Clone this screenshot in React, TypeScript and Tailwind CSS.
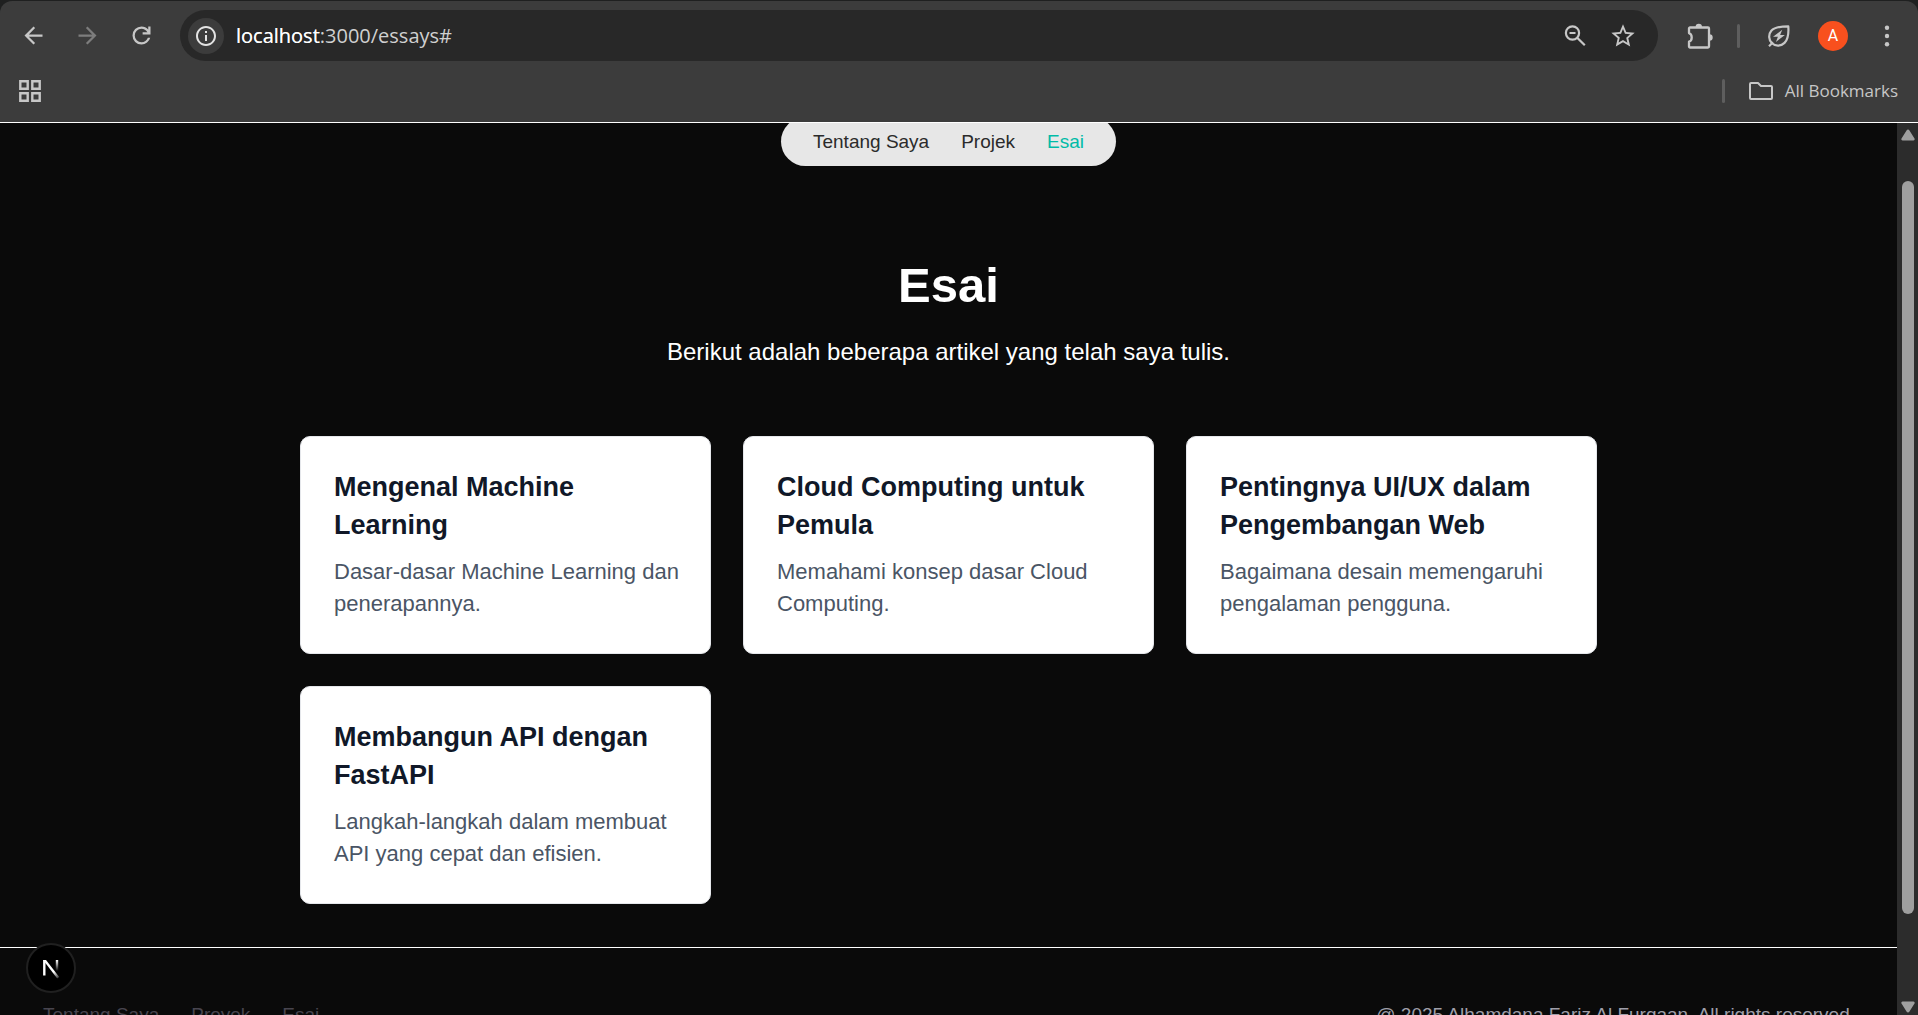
import { MdArrowBack, MdArrowForward, MdInfoOutline, MdStarBorder } from "react-icons/md";

const essays = [
  { title: "Mengenal Machine Learning", text: "Dasar-dasar Machine Learning dan penerapannya." },
  { title: "Cloud Computing untuk Pemula", text: "Memahami konsep dasar Cloud Computing." },
  { title: "Pentingnya UI/UX dalam Pengembangan Web", text: "Bagaimana desain memengaruhi pengalaman pengguna." },
  { title: "Membangun API dengan FastAPI", text: "Langkah-langkah dalam membuat API yang cepat dan efisien." },
];

function ReloadIcon() {
  return (
    <svg width="27" height="27" viewBox="0 0 24 24" fill="currentColor" aria-hidden="true">
      <path d="M12 20q-3.35 0-5.675-2.325T4 12t2.325-5.675T12 4q1.725 0 3.3.713T18 6.75V4h2v7h-7V9h4.2q-.8-1.4-2.187-2.2T12 6Q9.5 6 7.75 7.75T6 12t1.75 4.25T12 18q1.925 0 3.475-1.1T17.65 14h2.1q-.7 2.65-2.85 4.325T12 20" />
    </svg>
  );
}

function ZoomOutIcon() {
  return (
    <svg width="24" height="24" viewBox="0 0 24 24" fill="none" stroke="currentColor" strokeWidth="2.2" aria-hidden="true">
      <circle cx="9.5" cy="9" r="6.6" />
      <path d="M6.5 9h6M14.2 13.7l7.6 7.6" />
    </svg>
  );
}

function PuzzleIcon() {
  return (
    <svg width="26" height="26" viewBox="0 0 26 26" fill="none" stroke="currentColor" strokeWidth="2.3" strokeLinejoin="round" aria-hidden="true">
      <path d="M3 4.5h18a1 1 0 0 1 1 1v18a1 1 0 0 1-1 1H3a1 1 0 0 1-1-1v-4.8c3.600-1.200 3.600-7.400 0-8.600V5.500a1 1 0 0 1 1-1Z" />
      <path d="M8.600 4a3.200 3.200 0 0 1 6.400 0ZM22.500 11.300a3.200 3.200 0 0 1 0 6.400Z" fill="currentColor" stroke="none" />
    </svg>
  );
}

function LeafIcon() {
  return (
    <svg width="24" height="24" viewBox="0 0 24 24" fill="none" stroke="currentColor" strokeWidth="2.2" strokeLinejoin="round" aria-hidden="true">
      <path d="M5 19.300C1.500 16 1.300 10.300 4.300 6.800 7.600 3 13.500 2.300 21.300 2.300c.6 8-.5 13.300-3.800 16.600-3.400 3.400-9 3.700-12.500.4Z" />
      <path d="M2 22.200 6 18.300" />
      <path d="m15.300 5.800-9.300 7h4.900l-2 5.200 9-7h-4.800Z" fill="currentColor" stroke="none" />
    </svg>
  );
}

function AppsIcon() {
  return (
    <svg width="22" height="22" viewBox="0 0 22 22" fill="none" stroke="currentColor" strokeWidth="2.4" aria-hidden="true">
      <path d="M1.300 1.300h7.400v7.400H1.300zM13.300 1.300h7.400v7.400h-7.400zM1.300 13.300h7.400v7.400H1.300zM13.300 13.300h7.400v7.400h-7.400z" />
    </svg>
  );
}

function FolderIcon() {
  return (
    <svg width="24" height="18" viewBox="0 0 24 18" fill="none" stroke="currentColor" strokeWidth="2" strokeLinejoin="round" aria-hidden="true">
      <path d="M2 1h7l3 3h10a1 1 0 0 1 1 1v11a1 1 0 0 1-1 1H2a1 1 0 0 1-1-1V2a1 1 0 0 1 1-1Z" />
    </svg>
  );
}

function NextLogo() {
  return (
    <svg width="20" height="22" viewBox="0 0 20 22" fill="none" aria-hidden="true">
      <defs>
        <linearGradient id="stem" x1="0" y1="3" x2="0" y2="14" gradientUnits="userSpaceOnUse">
          <stop stopColor="#fff" />
          <stop offset="1" stopColor="#fff" stopOpacity="0" />
        </linearGradient>
        <linearGradient id="slash" x1="9" y1="10" x2="18" y2="22" gradientUnits="userSpaceOnUse">
          <stop offset=".4" stopColor="#fff" />
          <stop offset="1" stopColor="#fff" stopOpacity=".1" />
        </linearGradient>
      </defs>
      <path d="M3.300 18.500V3" stroke="#fff" strokeWidth="2.400" />
      <path d="M2.100 3h2.900l13.200 17-2 1.500Z" fill="url(#slash)" />
      <path d="M16 3v11" stroke="url(#stem)" strokeWidth="2.400" />
    </svg>
  );
}

function BrowserBar() {
  return (
    <header className="shrink-0 border-b border-white bg-[#1f2020] pt-px text-[#c7c7c7]">
      <div className="rounded-t-xl bg-[#3c3c3c]">
        <div className="flex h-[69px] items-center pr-[19px] pl-5">
          <div className="flex items-center gap-[27px]">
            <button aria-label="Back"><MdArrowBack size={27} /></button>
            <button aria-label="Forward" className="text-[#7d7d7d]"><MdArrowForward size={27} /></button>
            <button aria-label="Reload"><ReloadIcon /></button>
          </div>
          <div className="ml-[25px] flex h-[51px] flex-1 items-center rounded-full bg-[#282828] pr-[21px] pl-2">
            <button aria-label="Site information" className="flex size-9 shrink-0 items-center justify-center rounded-full bg-[#3c3c3c] text-[#e3e3e3]">
              <MdInfoOutline size={24} />
            </button>
            <div className="relative ml-3 flex-1 font-['Open_Sans','Noto_Sans',sans-serif] text-[20px] leading-7">
              <input
                aria-label="Address"
                defaultValue="localhost:3000/essays#"
                className="w-full bg-transparent text-[#d0d0d0] outline-none"
              />
              <span aria-hidden="true" className="pointer-events-none absolute top-0 left-0 text-white">localhost</span>
            </div>
            <div className="flex items-center gap-[22px]">
              <button aria-label="Zoom"><ZoomOutIcon /></button>
              <button aria-label="Bookmark this page"><MdStarBorder size={28} /></button>
            </div>
          </div>
          <button aria-label="Extensions" className="ml-[29px]"><PuzzleIcon /></button>
          <span className="ml-6 h-6 w-[3px] rounded-full bg-[#5e5e5e]" />
          <button aria-label="Energy saver" className="ml-[27px]"><LeafIcon /></button>
          <button aria-label="Profile" className="ml-[27px] flex size-[30px] items-center justify-center rounded-full bg-[#f8501e] font-[Roboto,sans-serif] text-[16px] text-white">
            A
          </button>
          <button aria-label="Menu" className="ml-[27px]">
            <svg width="24" height="24" viewBox="0 0 24 24" fill="currentColor" aria-hidden="true">
              <circle cx="12" cy="3.800" r="2.200" /><circle cx="12" cy="12" r="2.200" /><circle cx="12" cy="20.200" r="2.200" />
            </svg>
          </button>
        </div>
        <div className="flex h-[52px] items-start justify-between pt-[7px] pr-5 pl-[19px]">
          <button aria-label="Apps" className="flex h-7 items-center"><AppsIcon /></button>
          <div className="flex h-7 items-center">
            <span className="h-6 w-[3px] rounded-full bg-[#5e5e5e]" />
            <button className="ml-6 flex items-center gap-3 font-['Open_Sans','Noto_Sans',sans-serif] text-[17px] leading-7">
              <FolderIcon />
              All Bookmarks
            </button>
          </div>
        </div>
      </div>
    </header>
  );
}

function Scrollbar() {
  return (
    <div aria-hidden="true" className="flex w-[21px] shrink-0 flex-col items-center bg-[#2c2c2c] pt-1.5 pb-0.5 text-[#9f9f9f]">
      <svg width="14" height="12" viewBox="0 0 14 12" fill="currentColor">
        <path d="M5.700 1.200a1.500 1.500 0 0 1 2.600 0l5.200 8.200a1.300 1.300 0 0 1-1.100 2H1.600a1.300 1.300 0 0 1-1.100-2Z" />
      </svg>
      <div className="flex w-full grow flex-col items-center pt-10 pb-[87px]">
        <div className="w-3 grow rounded-full bg-[#9f9f9f]" />
      </div>
      <svg width="14" height="12" viewBox="0 0 14 12" fill="currentColor">
        <path d="M5.700 10.800a1.500 1.500 0 0 0 2.600 0l5.200-8.200a1.300 1.300 0 0 0-1.100-2H1.600a1.300 1.300 0 0 0-1.100 2Z" />
      </svg>
    </div>
  );
}

export default function App() {
  return (
    <div className="flex h-screen flex-col overflow-hidden bg-[#0a0a0a] font-['Liberation_Sans',Arial,sans-serif]">
      <BrowserBar />
      <div className="flex min-h-0 flex-1">
        <div className="relative min-w-0 flex-1 overflow-hidden">
          <nav className="mx-auto -mt-[6px] flex h-[49px] w-fit items-center gap-8 rounded-full bg-[#e7e7e7] px-8 text-[19px] leading-7 text-[#2b2b2b]">
            <a href="#about">Tentang Saya</a>
            <a href="#projects">Projek</a>
            <a href="#essays" className="text-teal-500">Esai</a>
          </nav>
          <main className="mx-auto max-w-[1297px] pt-[92px]">
            <h1 className="text-center text-[49px] leading-[54px] font-bold text-white">Esai</h1>
            <p className="mt-6 text-center text-[24px] leading-8 text-white">Berikut adalah beberapa artikel yang telah saya tulis.</p>
            <div className="mt-[68px] grid grid-cols-3 gap-8">
              {essays.map((essay) => (
                <article key={essay.title} className="rounded-[10px] border border-gray-200 bg-white pt-[31px] pr-6 pb-[33px] pl-[33px]">
                  <h2 className="text-[27px] leading-[38px] font-bold text-gray-900">{essay.title}</h2>
                  <p className="mt-3 text-[22px] leading-8 text-gray-600">{essay.text}</p>
                </article>
              ))}
            </div>
          </main>
          <footer className="mt-[43px] flex justify-between border-t border-white pt-[53px] pr-[42px] pl-[43px] text-[19px] leading-7">
            <div className="flex gap-8 text-[#48454f]">
              <a href="#about">Tentang Saya</a>
              <a href="#projects">Proyek</a>
              <a href="#essays">Esai</a>
            </div>
            <p className="text-[#9f9fa9]">@ 2025 Alhamdana Fariz Al Furqaan. All rights reserved.</p>
          </footer>
          <button aria-label="Open Next.js Dev Tools" className="absolute bottom-[22px] left-[26px] flex size-[50px] items-center justify-center rounded-full border-2 border-[#202020] bg-black">
            <NextLogo />
          </button>
        </div>
        <Scrollbar />
      </div>
    </div>
  );
}
